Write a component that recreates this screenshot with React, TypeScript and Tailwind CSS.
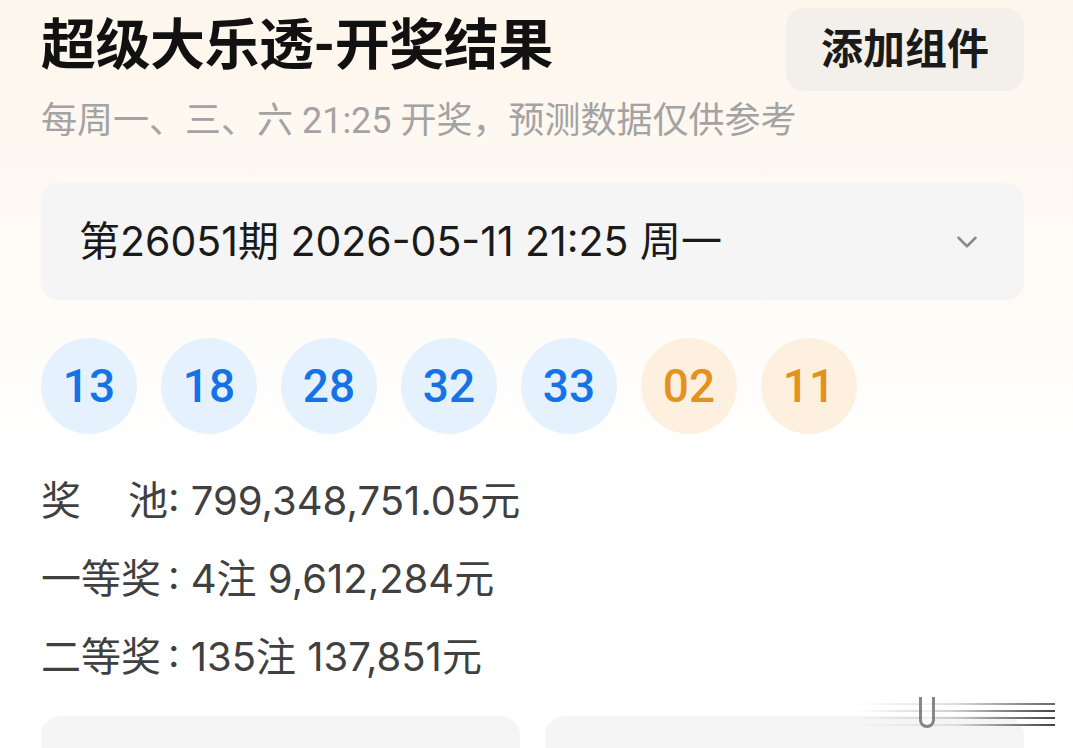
import { ChevronDown } from 'lucide-react'

const reds = ['13', '18', '28', '32', '33']
const blues = ['02', '11']

const prizes = [
    { label: ['奖', '池'], value: '799,348,751.05元' },
    { label: ['一等奖'], value: '4注 9,612,284元' },
    { label: ['二等奖'], value: '135注 137,851元' },
]

const inter = { fontFamily: 'Inter, "Noto Sans CJK SC", sans-serif' }

export default function App() {
    return (
        <div
            className="relative h-[748px] w-[1073px] overflow-hidden bg-gradient-to-b from-[#fdf6ec] via-[#fefbf6] via-40% to-white to-60%"
            style={{ fontFamily: 'Roboto, "Noto Sans CJK SC", "Noto Sans", sans-serif' }}
        >
            <div className="pl-[41px] pr-[49px] pt-[8px]">
                {/* Header */}
                <div className="flex h-[83px] items-center justify-between">
                    <h1 className="-mt-[8px] text-[55px] font-bold leading-none tracking-[-0.5px] text-[#111]">
                        超级大乐透-开奖结果
                    </h1>
                    <button className="flex h-[83px] w-[238px] items-center justify-center rounded-[18px] bg-[#f3f0ec] text-[42px] font-bold text-[#1a1a1a]">
                        添加组件
                    </button>
                </div>
                <p className="mt-[10px] text-[36px] leading-[40px] text-[#a3a3a3]">
                    每周一、三、六 21:25 开奖，预测数据仅供参考
                </p>

                {/* Issue selector */}
                <div className="mt-[42px] flex h-[117px] items-center justify-between rounded-[18px] bg-[#f5f5f5] pl-[38px] pr-[40px]">
                    <span className="text-[41px] text-[#1a1a1a]" style={inter}>
                        第26051期 2026-05-11 21:25 周一
                    </span>
                    <ChevronDown className="h-[34px] w-[34px] text-[#8a8a8a]" strokeWidth={1.8} />
                </div>

                {/* Balls */}
                <div className="mt-[38px] flex gap-[24px]">
                    {reds.map((n) => (
                        <div
                            key={n}
                            className="flex h-[96px] w-[96px] items-center justify-center rounded-full bg-[#e5f1fd] text-[46px] font-medium text-[#1473e6]"
                        >
                            {n}
                        </div>
                    ))}
                    {blues.map((n) => (
                        <div
                            key={n}
                            className="flex h-[96px] w-[96px] items-center justify-center rounded-full bg-[#fdf0df] text-[46px] font-medium text-[#e4921f]"
                        >
                            {n}
                        </div>
                    ))}
                </div>

                {/* Prize info */}
                <div className="mt-[28px]" style={inter}>
                    {prizes.map((p) => (
                        <div key={p.value} className="flex h-[78px] items-center text-[40px] text-[#404040]">
                            <span className="flex w-[127px] justify-between">
                                {p.label.map((c) => (
                                    <span key={c}>{c}</span>
                                ))}
                            </span>
                            <span>: {p.value}</span>
                        </div>
                    ))}
                </div>

                {/* Bottom cards */}
                <div className="mt-[20px] flex gap-[25px]">
                    <div className="h-[120px] flex-1 rounded-[20px] bg-[#f5f5f5]" />
                    <div className="h-[120px] flex-1 rounded-[20px] bg-[#f5f5f5]" />
                </div>
            </div>

            {/* Watermark */}
            <div className="absolute left-[855px] top-[697px] flex h-[32px] w-[200px] items-center">
                <div className="absolute inset-x-0 top-[6px] flex flex-col gap-[5px]">
                    <div className="h-[2px] bg-gradient-to-r from-transparent via-[#ddd] to-[#666]" />
                    <div className="h-[2px] bg-gradient-to-r from-transparent via-[#ccc] to-[#444]" />
                    <div className="h-[2px] bg-gradient-to-r from-transparent via-[#ccc] to-[#444]" />
                    <div className="h-[2px] bg-gradient-to-r from-transparent via-[#ddd] to-[#444]" />
                </div>
                <div className="absolute left-[64px] top-0 h-[31px] w-[16px] rounded-b-full border-x-[3px] border-b-[3px] border-[#555]/70 bg-white/60" />
            </div>
        </div>
    )
}
